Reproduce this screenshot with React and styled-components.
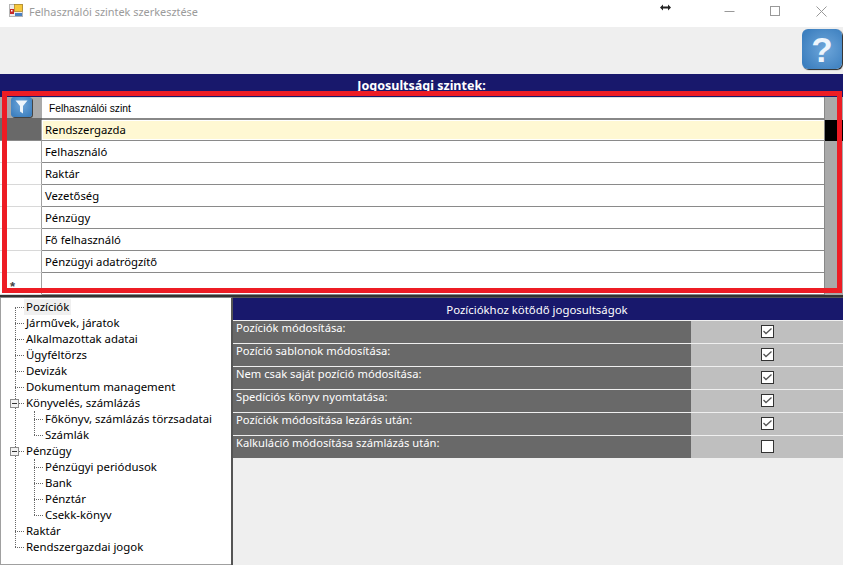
import React from 'react';
import styled, { createGlobalStyle } from 'styled-components';

const GlobalStyle = createGlobalStyle`
  html, body { margin: 0; padding: 0; background: #efefef; }
  body { font-family: "Liberation Sans", Arial, sans-serif; overflow: hidden; }
`;

const Window = styled.div`
  width: 843px;
  height: 565px;
  display: flex;
  flex-direction: column;
  position: relative;
  overflow: hidden;
  background: #efefef;
`;

const TitleBar = styled.div`
  height: 27px;
  background: #fff;
  display: flex;
  align-items: flex-start;
  padding: 4px 0 0 9px;
  gap: 6px;
  box-sizing: border-box;
`;

const TitleText = styled.span`
  font-family: "Noto Sans", sans-serif;
  font-size: 10.9px;
  line-height: 16px;
  color: #9b9b9b;
  flex: 1;
`;

const WinButtons = styled.div`
  display: flex;
  margin: -4px -1px 0 0;
  position: relative;
`;

const WinButton = styled.div`
  width: 46px;
  height: 22px;
  display: flex;
  align-items: center;
  justify-content: center;
`;

const ResizeCursor = styled.svg`
  position: absolute;
  left: -46px;
  top: 4px;
`;

const Toolbar = styled.div`
  height: 47px;
  display: flex;
  justify-content: flex-end;
  padding: 2px 1px 0 0;
  box-sizing: border-box;
`;

const HelpButton = styled.div`
  width: 40px;
  height: 40px;
  border-radius: 6px;
  background: radial-gradient(circle at 58% 50%, #6ea6da, #3c7fbf 85%);
  box-shadow: 1px 1px 1px #222;
  color: #eef5fc;
  font-family: "Liberation Sans", sans-serif;
  font-weight: 700;
  font-size: 35px;
  line-height: 42px;
  text-align: center;
`;

const Banner = styled.div`
  height: 23px;
  background: #18186c;
  color: #fff;
  font-family: "Noto Sans", sans-serif;
  font-weight: 700;
  font-size: 12.5px;
  line-height: 24px;
  text-align: center;
`;

const Grid = styled.div`
  height: 198px;
  background: #fff;
  border-bottom: 2px solid #333;
  display: grid;
  grid-template-columns: 42px 1fr 19px;
  grid-template-rows: 23px 21px repeat(7, 22px);
`;

const HeaderCorner = styled.div`
  background: #a9a9a9;
  border-bottom: 2px solid #696969;
  padding-left: 11px;
`;

const FilterButton = styled.div`
  width: 21px;
  height: 20px;
  border-radius: 3px;
  background: radial-gradient(circle at 50% 40%, #6ea6da, #3c7fbf 85%);
  box-shadow: 1px 1px 0 #444;
  display: flex;
  align-items: center;
  justify-content: center;
`;

const HeaderCell = styled.div`
  background: #fff;
  border-bottom: 2px solid #888;
  box-shadow: inset 0 1px 0 #ddd;
  font-family: "Liberation Sans", sans-serif;
  font-size: 10.3px;
  color: #000;
  line-height: 24px;
  padding-left: 7px;
`;

const ScrollCell = styled.div`
  background: ${p => (p.$active ? '#000' : '#a9a9a9')};
  border-left: 1px solid #888;
`;

const RowHead = styled.div`
  background: ${p => (p.$active ? '#696969' : '#fff')};
  border-bottom: 1px solid ${p => (p.$active ? '#8a8a8a' : '#d8d8d8')};
  border-right: 1px solid #a0a0a0;
  font-size: 13px;
  font-weight: 700;
  color: #444;
  padding-left: 10px;
  line-height: 27px;
`;

const RowCell = styled.div`
  background: ${p => (p.$active ? '#fff8d3' : '#fff')};
  border-bottom: 1px solid #8a8a8a;
  font-family: "Noto Sans", sans-serif;
  font-size: 11.3px;
  color: #000;
  line-height: ${p => (p.$active ? 19 : 22)}px;
  padding-left: 3px;
  ${p => (p.$active ? 'box-shadow: inset 0 1px 0 #fff, inset 1px 0 0 #fff, inset 0 -1px 0 #fff;' : '')}
`;

const Highlight = styled.div`
  position: absolute;
  left: 2px;
  top: 91px;
  width: 840px;
  height: 202px;
  border: 5px solid #ed1c24;
  box-sizing: border-box;
  pointer-events: none;
`;

const Body = styled.div`
  flex: 1;
  display: flex;
  min-height: 0;
`;

const TreePanel = styled.div`
  width: 231px;
  background: #fff;
  border-top: 1px solid #888;
  border-right: 2px solid #555;
  box-shadow: inset 1px 0 0 #a0a0a0, inset 0 -1px 0 #a0a0a0;
  padding-top: 1px;
  position: relative;
`;

const TreeRow = styled.div`
  height: 16px;
  display: flex;
  align-items: center;
  padding-left: ${p => (p.$child ? 45 : 26)}px;
  font-family: "Noto Sans", sans-serif;
  font-size: 11.4px;
  color: #000;
  white-space: nowrap;
  position: relative;

  &::before {
    content: '';
    position: absolute;
    left: ${p => (p.$child ? 34 : 15)}px;
    width: 9px;
    top: 8px;
    border-top: 1px dotted #666;
  }
`;

const TreeLabel = styled.span`
  background: ${p => (p.$selected ? '#f0f0f0' : 'transparent')};
  margin-left: -2px;
  padding: 0 2px;
  line-height: 16px;
`;

const TreeLine = styled.div`
  position: absolute;
  left: ${p => p.$left}px;
  top: ${p => p.$top}px;
  height: ${p => p.$height}px;
  border-left: 1px dotted #666;
`;

const Expander = styled.div`
  position: absolute;
  left: 10px;
  top: 4px;
  width: 9px;
  height: 9px;
  box-sizing: border-box;
  background: #f2f2f2;
  border: 1px solid #8c8c8c;
  z-index: 1;

  &::after {
    content: '';
    position: absolute;
    left: 1px;
    right: 1px;
    top: 3px;
    height: 1px;
    background: #333;
  }
`;

const RightsPanel = styled.div`
  flex: 1;
  display: flex;
  flex-direction: column;
`;

const RightsHeader = styled.div`
  height: 23px;
  background: #18186c;
  border-top: 1px solid #555;
  box-sizing: border-box;
  color: #fff;
  font-family: "Noto Sans", sans-serif;
  font-size: 11.4px;
  line-height: 23px;
  text-align: center;
  padding-right: 2px;
`;

const RightRow = styled.div`
  height: 23px;
  display: grid;
  grid-template-columns: 458px 1fr;
  border-top: 1px solid #efefef;
  box-sizing: border-box;
`;

const RightLabel = styled.div`
  background: #696969;
  color: #fff;
  font-family: "Noto Sans", sans-serif;
  font-size: 11.2px;
  line-height: 14px;
  padding-left: 3px;
`;

const RightValue = styled.div`
  background: #bfbfbf;
  display: flex;
  align-items: center;
  justify-content: center;
  padding-bottom: 1px;
`;

const CheckBox = styled.div`
  width: 11px;
  height: 11px;
  background: #fff;
  border: 1px solid #333;
  display: flex;
  align-items: center;
  justify-content: center;
`;

const levels = ['Felhasználó', 'Raktár', 'Vezetőség', 'Pénzügy', 'Fő felhasználó', 'Pénzügyi adatrögzítő'];

const tree = [
  { label: 'Pozíciók', selected: true },
  { label: 'Járművek, járatok' },
  { label: 'Alkalmazottak adatai' },
  { label: 'Ügyféltörzs' },
  { label: 'Devizák' },
  { label: 'Dokumentum management' },
  { label: 'Könyvelés, számlázás', open: true },
  { label: 'Főkönyv, számlázás törzsadatai', child: true },
  { label: 'Számlák', child: true },
  { label: 'Pénzügy', open: true },
  { label: 'Pénzügyi periódusok', child: true },
  { label: 'Bank', child: true },
  { label: 'Pénztár', child: true },
  { label: 'Csekk-könyv', child: true },
  { label: 'Raktár' },
  { label: 'Rendszergazdai jogok' },
];

const rights = [
  ['Pozíciók módosítása:', true],
  ['Pozíció sablonok módosítása:', true],
  ['Nem csak saját pozíció módosítása:', true],
  ['Spedíciós könyv nyomtatása:', true],
  ['Pozíciók módosítása lezárás után:', true],
  ['Kalkuláció módosítása számlázás után:', false],
];

const AppIcon = () => (
  <svg width="14" height="13" viewBox="0 0 14 13">
    <rect x="0.5" y="0.5" width="13" height="12" fill="#ececec" stroke="#b5b5b5" />
    <rect x="5.5" y="0.5" width="8" height="7" fill="#f6c83c" stroke="#a8801a" strokeWidth="0.7" />
    <rect x="1" y="5" width="4" height="5" fill="#c62828" />
    <rect x="2" y="6" width="1.5" height="1.5" fill="#fff" />
    <rect x="6" y="9" width="7" height="3" fill="#4a7fc0" />
  </svg>
);

const FilterIcon = () => (
  <svg width="13" height="14" viewBox="0 0 13 14">
    <path d="M0.5 0.5 H12.5 L8 6 V13.5 L5 11.5 V6 Z" fill="#eef5fb" />
  </svg>
);

const CheckMark = () => (
  <svg width="11" height="11" viewBox="0 0 11 11">
    <path d="M1.5 5 L4 7.5 L9.5 2.5" fill="none" stroke="#555" strokeWidth="1.3" />
  </svg>
);

const App = () => (
  <Window>
    <GlobalStyle />
    <TitleBar>
      <AppIcon />
      <TitleText>Felhasználói szintek szerkesztése</TitleText>
      <WinButtons>
        <ResizeCursor width="11" height="7" viewBox="0 0 11 7">
          <path d="M0 3.5 L3 0.5 V2.5 H8 V0.5 L11 3.5 L8 6.5 V4.5 H3 V6.5 Z" fill="#222" />
        </ResizeCursor>
        <WinButton>
          <svg width="11" height="11" viewBox="0 0 11 11"><path d="M0.5 5.5 H10.5" stroke="#999" /></svg>
        </WinButton>
        <WinButton>
          <svg width="11" height="11" viewBox="0 0 11 11"><rect x="0.5" y="0.5" width="9" height="9" fill="none" stroke="#999" /></svg>
        </WinButton>
        <WinButton>
          <svg width="11" height="11" viewBox="0 0 11 11"><path d="M0.5 0.5 L10.5 10.5 M10.5 0.5 L0.5 10.5" stroke="#999" /></svg>
        </WinButton>
      </WinButtons>
    </TitleBar>
    <Toolbar>
      <HelpButton>?</HelpButton>
    </Toolbar>
    <Banner>Jogosultsági szintek:</Banner>
    <Grid>
      <HeaderCorner><FilterButton><FilterIcon /></FilterButton></HeaderCorner>
      <HeaderCell>Felhasználói szint</HeaderCell>
      <ScrollCell />
      <RowHead $active />
      <RowCell $active>Rendszergazda</RowCell>
      <ScrollCell $active />
      {levels.map(level => (
        <React.Fragment key={level}>
          <RowHead />
          <RowCell>{level}</RowCell>
          <ScrollCell />
        </React.Fragment>
      ))}
      <RowHead>*</RowHead>
      <RowCell />
      <ScrollCell />
    </Grid>
    <Highlight />
    <Body>
      <TreePanel>
        <TreeLine $left={15} $top={9} $height={240} />
        <TreeLine $left={34} $top={113} $height={24} />
        <TreeLine $left={34} $top={161} $height={56} />
        {tree.map(item => (
          <TreeRow key={item.label} $child={item.child}>
            {item.open && <Expander />}
            <TreeLabel $selected={item.selected}>{item.label}</TreeLabel>
          </TreeRow>
        ))}
      </TreePanel>
      <RightsPanel>
        <RightsHeader>Pozíciókhoz kötődő jogosultságok</RightsHeader>
        {rights.map(([label, checked]) => (
          <RightRow key={label}>
            <RightLabel>{label}</RightLabel>
            <RightValue>
              <CheckBox>{checked && <CheckMark />}</CheckBox>
            </RightValue>
          </RightRow>
        ))}
      </RightsPanel>
    </Body>
  </Window>
);

export default App;
